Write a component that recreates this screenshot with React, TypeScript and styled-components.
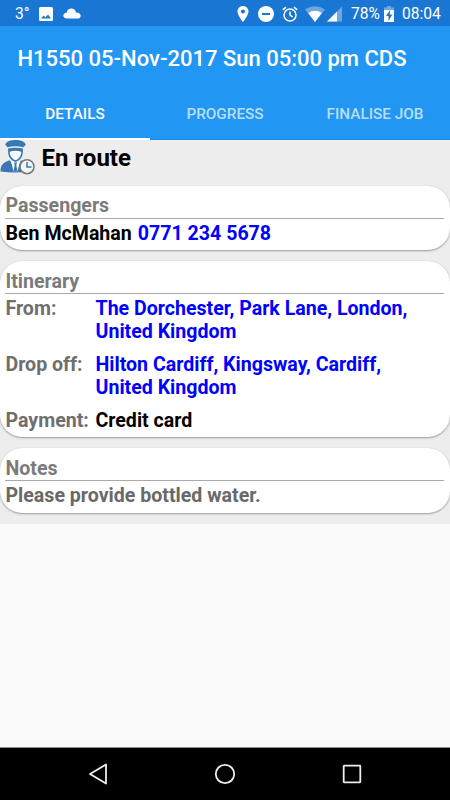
import React from 'react';
import styled, { createGlobalStyle } from 'styled-components';

const Global = createGlobalStyle`
  * { box-sizing: border-box; }
  html, body { margin: 0; padding: 0; }
  body { font-family: Roboto, "Liberation Sans", sans-serif; overflow: hidden; }
`;

const Screen = styled.div`
  width: 450px;
  height: 800px;
  display: flex;
  flex-direction: column;
  background: #fafafa;
  overflow: hidden;
`;

const StatusBar = styled.header`
  height: 26px;
  flex: none;
  display: flex;
  align-items: center;
  justify-content: space-between;
  padding: 1px 9px 0 15px;
  background: #1976d2;
  color: #fff;
  font-size: 15.6px;
  line-height: 26px;
  white-space: nowrap;
`;

const StatusGroup = styled.div`
  display: flex;
  align-items: center;
`;

const StatusText = styled.span<{ $width: number; $gap?: number }>`
  width: ${p => p.$width}px;
  margin-right: ${p => p.$gap ?? 0}px;
`;

const Glyph = styled.svg<{ $gap?: number }>`
  display: block;
  flex: none;
  margin-right: ${p => p.$gap ?? 0}px;
`;

const AppBar = styled.div`
  height: 114px;
  flex: none;
  display: flex;
  flex-direction: column;
  background: #2196f3;
  color: #fff;
`;

const Title = styled.h1`
  margin: 0;
  height: 63px;
  padding-left: 17.5px;
  line-height: 65px;
  font-size: 22px;
  font-weight: 500;
  white-space: nowrap;
`;

const Tabs = styled.nav`
  flex: 1;
  display: grid;
  grid-template-columns: repeat(3, 1fr);
`;

const Tab = styled.div<{ $active?: boolean }>`
  text-align: center;
  font-size: 15.3px;
  line-height: 51px;
  height: 51px;
  font-weight: 500;
  color: ${p => (p.$active ? '#fff' : 'rgba(255,255,255,0.7)')};
  box-shadow: ${p => (p.$active ? 'inset 0 -2px #fff' : 'inset 0 -1px #1b88e6')};
`;

const Content = styled.main`
  height: 384px;
  flex: none;
  background: #ededed;
`;

const JobStatus = styled.div`
  height: 46px;
  display: flex;
  align-items: flex-start;
  font-size: 24px;
  font-weight: 700;
  line-height: 36px;
`;

const StatusLabel = styled.span`
  margin-left: 5.5px;
`;

const Card = styled.section<{ $height: number; $top?: number }>`
  height: ${p => p.$height}px;
  margin-bottom: 11px;
  padding: ${p => p.$top ?? 8}px 5.5px 0;
  border-radius: 22px;
  background: #fff;
  box-shadow: 0 1px 2px rgba(0, 0, 0, 0.34), 0 0 1px rgba(0, 0, 0, 0.12);
  font-size: 19.58px;
  font-weight: 700;
  line-height: 23px;
  white-space: nowrap;
`;

const CardTitle = styled.h2<{ $height?: number }>`
  margin: 0 0.5px 0 -0.5px;
  padding-left: 0.5px;
  height: ${p => p.$height ?? 25}px;
  font: inherit;
  color: #7b7b7b;
  border-bottom: 1px solid #aaa;
`;

const Line = styled.div`
  margin-top: 3px;
  display: flex;
  gap: 6px;
`;

const Phone = styled.span`
  color: #00f;
`;

const Note = styled.div`
  margin-top: 3px;
  color: #696969;
`;

const Field = styled.div`
  display: grid;
  grid-template-columns: 90px 1fr;
  margin: 3px 0 10px;

  & + & { margin-top: 0; }
`;

const FieldName = styled.span`
  color: #6e6e6e;
`;

const FieldValue = styled.span<{ $link?: boolean }>`
  color: ${p => (p.$link ? '#00f' : '#000')};
`;

const Spacer = styled.div`
  flex: 1;
`;

const NavBar = styled.footer`
  height: 53px;
  flex: none;
  display: flex;
  justify-content: space-between;
  align-items: center;
  padding: 0 87px 1px;
  background: #000;
  border-top: 1px solid #888;
`;

const Driver = () => (
  <Glyph width="36" height="36" viewBox="0 0 36 36">
    <path d="M5.300 4.700C6 1.300 11 0 15.500 0S25 1.300 25.700 4.700L23.500 7.300Q15.500 5.400 7.500 7.300Z" fill="#3a78b5" />
    <path d="M8 8.600Q15.500 7 23 8.600L22.700 14Q21.500 20 15.500 22Q9.500 20 8.300 14Z" fill="#3a78b5" />
    <path d="M9.800 11.700Q15.500 9.800 21.200 11.700V13.500Q20 18.500 15.500 20.300Q11 18.500 9.800 13.500Z" fill="#fff" />
    <path d="M0.500 31.500C0.500 25 3 22.300 10 20.300L15.500 32L21 20.300C26 22 30 24 30 31.500Q15 33.500 0.500 31.500Z" fill="#3a78b5" />
    <path d="M11 20.500L15.500 22.500L20 20.500L17.500 31.500H13.500Z" fill="#fff" />
    <path d="M14 22.500H17L16.300 25L17.500 31.700H13.500L14.700 25Z" fill="#3a78b5" />
    <circle cx="27" cy="26.700" r="7" fill="#f4f4f4" stroke="#747779" strokeWidth="1.500" />
    <path d="M27 22V27H31.500" fill="none" stroke="#3a78b5" strokeWidth="1.500" />
  </Glyph>
);

const App = () => (
  <>
    <Global />
    <Screen>
      <StatusBar>
        <StatusGroup>
          <StatusText $width={24}>3°</StatusText>
          <Glyph width="14" height="14" viewBox="0 0 14 14" $gap={10}>
            <path fillRule="evenodd" fill="#fff" d="M1.500 0H12.500Q14 0 14 1.500V12.500Q14 14 12.500 14H1.500Q0 14 0 12.500V1.500Q0 0 1.500 0ZM2 11.500H12L9 7.500L6.500 10.500L4.800 8.500Z" />
          </Glyph>
          <Glyph width="18" height="11" viewBox="0 0 18 11">
            <path fill="#fff" d="M4 10.500C1.500 10.500 .3 9.100 .3 7.500S1.700 4.800 3.600 4.700C4 1.800 6 .5 8.400 .5S12.300 2 13 4.400C16 4.500 17.700 5.700 17.700 7.700S16.300 10.500 14.500 10.500Z" />
          </Glyph>
        </StatusGroup>
        <StatusGroup>
          <Glyph width="12" height="16" viewBox="0 0 12 16" $gap={9}>
            <path fillRule="evenodd" fill="#fff" d="M6 0C2.800 0 .5 2.400 .5 5.500C.5 9.500 6 16 6 16S11.500 9.500 11.500 5.500C11.500 2.400 9.200 0 6 0ZM6 3.500A2 2 0 1 1 6 7.500A2 2 0 1 1 6 3.500Z" />
          </Glyph>
          <Glyph width="16" height="16" viewBox="0 0 16 16" $gap={8}>
            <circle cx="8" cy="8" r="8" fill="#fff" />
            <path d="M4 8H12" stroke="#1976d2" strokeWidth="2" />
          </Glyph>
          <Glyph width="16" height="16" viewBox="0 0 16 16" $gap={7}>
            <g fill="none" stroke="#fff" strokeWidth="1.500">
              <circle cx="8" cy="9" r="6" />
              <path d="M8 5.500V9L10.700 11M.8 3.800L4 1.200M15.200 3.800L12 1.200" />
            </g>
          </Glyph>
          <Glyph width="20" height="16" viewBox="0 0 20 16" $gap={2}>
            <path d="M0 3.500Q10 -3 20 3.500L10 16Z" fill="#6da7e2" />
            <path d="M3.200 7Q10 2.700 16.800 7L10 16Z" fill="#fff" />
          </Glyph>
          <Glyph width="15" height="16" viewBox="0 0 15 16" $gap={9}>
            <path d="M0 15.500L15 .5V15.500Z" fill="#6da7e2" />
            <path d="M0 15.500L10 5.500V15.500Z" fill="#fff" />
          </Glyph>
          <StatusText $width={28} $gap={5}>78%</StatusText>
          <Glyph width="10" height="16" viewBox="0 0 10 16" $gap={8}>
            <path d="M0 1.500H3V0H7V1.500H10V4H0Z" fill="#6da7e2" />
            <path d="M0 4H10V16H0Z" fill="#fff" />
            <path d="M6 4L2 10H4.500V15L8.300 8.500H5.800Z" fill="#1976d2" />
          </Glyph>
          <StatusText $width={39}>08:04</StatusText>
        </StatusGroup>
      </StatusBar>
      <AppBar>
        <Title>H1550 05-Nov-2017 Sun 05:00 pm CDS</Title>
        <Tabs>
          <Tab $active>DETAILS</Tab>
          <Tab>PROGRESS</Tab>
          <Tab>FINALISE JOB</Tab>
        </Tabs>
      </AppBar>
      <Content>
        <JobStatus>
          <Driver />
          <StatusLabel>En route</StatusLabel>
        </JobStatus>
        <Card $height={64}>
          <CardTitle>Passengers</CardTitle>
          <Line>
            <span>Ben McMahan</span>
            <Phone>0771 234 5678</Phone>
          </Line>
        </Card>
        <Card $height={176} $top={9}>
          <CardTitle $height={24}>Itinerary</CardTitle>
          <Field>
            <FieldName>From:</FieldName>
            <FieldValue $link>The Dorchester, Park Lane, London,<br />United Kingdom</FieldValue>
          </Field>
          <Field>
            <FieldName>Drop off:</FieldName>
            <FieldValue $link>Hilton Cardiff, Kingsway, Cardiff,<br />United Kingdom</FieldValue>
          </Field>
          <Field>
            <FieldName>Payment:</FieldName>
            <FieldValue>Credit card</FieldValue>
          </Field>
        </Card>
        <Card $height={65} $top={9}>
          <CardTitle $height={24}>Notes</CardTitle>
          <Note>Please provide bottled water.</Note>
        </Card>
      </Content>
      <Spacer />
      <NavBar>
        <Glyph width="22" height="22" viewBox="0 0 22 22">
          <path d="M19 1.500V20.500L3 11Z" fill="none" stroke="#eee" strokeWidth="1.800" strokeLinejoin="round" />
        </Glyph>
        <Glyph width="22" height="22" viewBox="0 0 22 22">
          <circle cx="11" cy="11" r="9.200" fill="none" stroke="#eee" strokeWidth="1.800" />
        </Glyph>
        <Glyph width="22" height="22" viewBox="0 0 22 22">
          <rect x="2.700" y="2.700" width="16.600" height="16.600" rx="0.500" fill="none" stroke="#eee" strokeWidth="1.800" />
        </Glyph>
      </NavBar>
    </Screen>
  </>
);

export default App;
